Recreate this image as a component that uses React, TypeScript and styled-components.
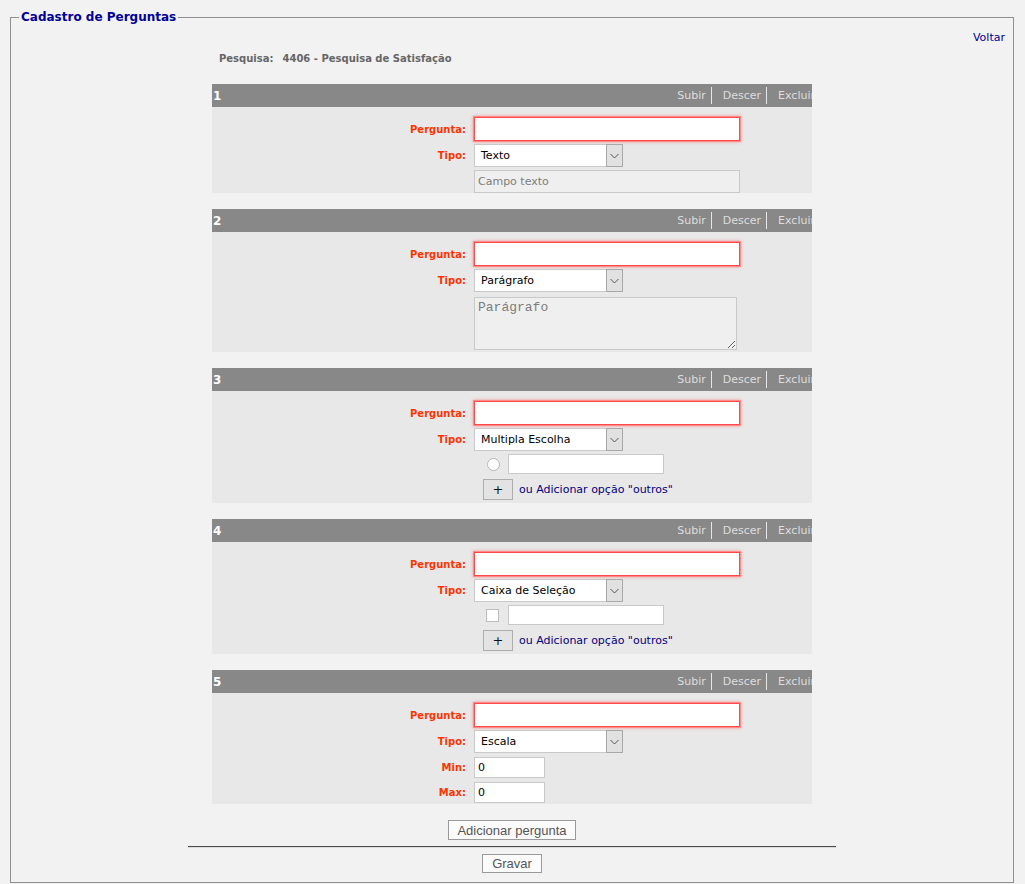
import styled, { createGlobalStyle } from 'styled-components';

const GlobalStyle = createGlobalStyle`
  html, body { margin: 0; padding: 0; background: #f2f2f2; }
  body { font-family: "DejaVu Sans", Verdana, sans-serif; font-size: 11px; color: #333; }
  * { box-sizing: border-box; }
`;

const Page = styled.div`
  padding-top: 10px;
  padding-bottom: 1px;
`;

const Frame = styled.fieldset`
  margin: 0 11px 0 10px;
  padding: 0 8px 9px 8px;
  border: 1px solid #8f8f8f;
  min-width: 0;
`;

const Legend = styled.legend`
  padding: 0 2px;
  font-size: 12px;
  line-height: 14px;
  font-weight: bold;
  color: #000099;
`;

const TopBar = styled.div`
  display: flex;
  justify-content: flex-end;
  margin-top: 7px;
  line-height: 13px;
`;

const BackLink = styled.a`
  color: #000099;
  text-decoration: none;
  font-size: 11px;
`;

const Column = styled.div`
  width: 600px;
  margin: 0 auto;
`;

const InfoRow = styled.div`
  display: flex;
  gap: 9px;
  margin-top: 8px;
  padding-left: 7px;
  font-size: 10px;
  line-height: 13px;
  font-weight: bold;
  color: #666;
`;

const QuestionList = styled.div`
  display: flex;
  flex-direction: column;
  gap: 16px;
  margin-top: 19px;
`;

const Block = styled.section`
  display: flex;
  flex-direction: column;
`;

const BlockHead = styled.div`
  display: flex;
  align-items: center;
  height: 23px;
  background: #888888;
  overflow: hidden;
`;

const BlockNo = styled.span`
  flex: 1;
  padding-left: 1px;
  font-size: 12px;
  font-weight: bold;
  color: #fff;
`;

const Actions = styled.div`
  display: flex;
  flex: none;
  align-items: center;
  margin-right: -8px;
  white-space: nowrap;
`;

const Action = styled.a`
  display: flex;
  align-items: center;
  height: 17px;
  padding: 0 5px 0 11px;
  font-size: 11px;
  color: #dedede;
  text-decoration: none;
  border-right: 1px solid #e6e6e6;
  &:first-child { padding-left: 10px; }
  &:last-child { border-right: 0; }
`;

const BlockBody = styled.div<{ $pb: number }>`
  display: grid;
  grid-template-columns: 256px 268px;
  column-gap: 6px;
  align-items: center;
  padding: 10px 0 ${(p) => p.$pb}px;
  background: #e8e8e8;
`;

const Label = styled.span<{ $mt?: number }>`
  grid-column: 1;
  justify-self: end;
  padding-right: 2px;
  margin-top: ${(p) => p.$mt ?? 0}px;
  font-size: 10px;
  font-weight: bold;
  color: #ff3300;
`;

const Cell = styled.div<{ $mt?: number }>`
  grid-column: 2;
  display: flex;
  align-items: center;
  margin-top: ${(p) => p.$mt ?? 0}px;
`;

const QuestionInput = styled.input`
  width: 266px;
  height: 24px;
  margin: 0;
  padding: 0 4px;
  border: 1px solid #ff4a4a;
  box-shadow: 0 0 0 1px #ff8a8a, 0 0 3px 1px rgba(255, 90, 90, 0.55);
  background: #fff;
  font: 11px "DejaVu Sans", Verdana, sans-serif;
  outline: none;
`;

const SelectBox = styled.div`
  display: flex;
  width: 149px;
  height: 23px;
  border: 1px solid #c9c9c9;
  background: #fff;
`;

const SelectText = styled.span`
  flex: 1;
  display: flex;
  align-items: center;
  padding-left: 6px;
  font-size: 11px;
  color: #000;
`;

const SelectArrow = styled.span`
  display: flex;
  align-items: center;
  justify-content: center;
  width: 17px;
  margin: -1px -1px -1px 0;
  border: 1px solid #a8a8a8;
  background: #e1e1e1;
`;

const MutedField = styled.input`
  width: 266px;
  height: 23px;
  margin: 0;
  padding: 0 3px;
  border: 1px solid #c9c9c9;
  background: #efefef;
  font: 11px "DejaVu Sans", Verdana, sans-serif;
  &::placeholder { color: #7d7d7d; }
`;

const MutedArea = styled.textarea`
  width: 263px;
  height: 53px;
  margin: 0;
  padding: 2px 3px;
  border: 1px solid #c9c9c9;
  background: #efefef;
  resize: both;
  font: 13px "Liberation Mono", "Courier New", monospace;
  &::placeholder { color: #7d7d7d; }
`;

const OptionRow = styled.div<{ $indent: number }>`
  display: flex;
  align-items: center;
  gap: 8px;
  padding-left: ${(p) => p.$indent}px;
`;

const Radio = styled.span`
  width: 13px;
  height: 13px;
  border-radius: 50%;
  border: 1px solid #b5b5b5;
  background: #fff;
`;

const Check = styled.span`
  width: 13px;
  height: 13px;
  margin-right: 1px;
  border: 1px solid #bdbdbd;
  background: #fff;
`;

const OptionInput = styled.input`
  width: 156px;
  height: 20px;
  margin: 0;
  padding: 0 3px;
  border: 1px solid #c9c9c9;
  background: #fff;
  font: 11px "DejaVu Sans", Verdana, sans-serif;
`;

const AddRow = styled.div`
  display: flex;
  align-items: center;
  gap: 6px;
  padding-left: 9px;
`;

const PlusButton = styled.button`
  width: 30px;
  height: 21px;
  padding: 0;
  border: 1px solid #adadad;
  background: #e3e3e3;
  font: 13px "DejaVu Sans", Verdana, sans-serif;
  color: #111;
`;

const OtherLink = styled.a`
  font-size: 11px;
  color: #000080;
  text-decoration: none;
`;

const SmallInput = styled.input`
  width: 71px;
  height: 21px;
  margin: 0;
  padding: 0 3px;
  border: 1px solid #c9c9c9;
  background: #fff;
  font: 11px "DejaVu Sans", Verdana, sans-serif;
  color: #000;
`;

const Footer = styled.div`
  display: flex;
  flex-direction: column;
  align-items: center;
  margin-top: 16px;
`;

const PlainButton = styled.button<{ $w: number; $h: number }>`
  width: ${(p) => p.$w}px;
  height: ${(p) => p.$h}px;
  padding: 0;
  border: 1px solid #9a9a9a;
  background: #fbfbfb;
  font: 13px "Liberation Sans", Arial, sans-serif;
  color: #555;
`;

const Rule = styled.hr`
  width: 648px;
  margin: 6px 0 6px;
  border: 0;
  border-top: 1px solid #4a4a4a;
  border-bottom: 1px solid #dcdcdc;
`;

function Chevron() {
  return (
    <svg width="9" height="6" viewBox="0 0 9 6">
      <path d="M0.5 1 L4.5 5 L8.5 1" fill="none" stroke="#555" strokeWidth="1" />
    </svg>
  );
}

function Select({ value }: { value: string }) {
  return (
    <SelectBox>
      <SelectText>{value}</SelectText>
      <SelectArrow>
        <Chevron />
      </SelectArrow>
    </SelectBox>
  );
}

function Head({ n }: { n: number }) {
  return (
    <BlockHead>
      <BlockNo>{n}</BlockNo>
      <Actions>
        <Action href="#">Subir</Action>
        <Action href="#">Descer</Action>
        <Action href="#">Excluir</Action>
      </Actions>
    </BlockHead>
  );
}

function TopRows({ tipo }: { tipo: string }) {
  return (
    <>
      <Label>Pergunta:</Label>
      <Cell>
        <QuestionInput />
      </Cell>
      <Label $mt={3}>Tipo:</Label>
      <Cell $mt={3}>
        <Select value={tipo} />
      </Cell>
    </>
  );
}

function OptionsRows({ kind }: { kind: 'radio' | 'check' }) {
  return (
    <>
      <Cell $mt={3}>
        <OptionRow $indent={kind === 'radio' ? 13 : 12}>
          {kind === 'radio' ? <Radio /> : <Check />}
          <OptionInput />
        </OptionRow>
      </Cell>
      <Cell $mt={5}>
        <AddRow>
          <PlusButton>+</PlusButton>
          <OtherLink href="#">ou Adicionar opção "outros"</OtherLink>
        </AddRow>
      </Cell>
    </>
  );
}

export default function App() {
  return (
    <Page>
      <GlobalStyle />
      <Frame>
        <Legend>Cadastro de Perguntas</Legend>
        <TopBar>
          <BackLink href="#">Voltar</BackLink>
        </TopBar>
        <Column>
          <InfoRow>
            <span>Pesquisa:</span>
            <span>4406 - Pesquisa de Satisfação</span>
          </InfoRow>
          <QuestionList>
            <Block>
              <Head n={1} />
              <BlockBody $pb={0}>
                <TopRows tipo="Texto" />
                <Cell $mt={3}>
                  <MutedField placeholder="Campo texto" readOnly />
                </Cell>
              </BlockBody>
            </Block>
            <Block>
              <Head n={2} />
              <BlockBody $pb={2}>
                <TopRows tipo="Parágrafo" />
                <Cell $mt={5}>
                  <MutedArea placeholder="Parágrafo" readOnly />
                </Cell>
              </BlockBody>
            </Block>
            <Block>
              <Head n={3} />
              <BlockBody $pb={3}>
                <TopRows tipo="Multipla Escolha" />
                <OptionsRows kind="radio" />
              </BlockBody>
            </Block>
            <Block>
              <Head n={4} />
              <BlockBody $pb={3}>
                <TopRows tipo="Caixa de Seleção" />
                <OptionsRows kind="check" />
              </BlockBody>
            </Block>
            <Block>
              <Head n={5} />
              <BlockBody $pb={1}>
                <TopRows tipo="Escala" />
                <Label $mt={4}>Min:</Label>
                <Cell $mt={4}>
                  <SmallInput defaultValue="0" />
                </Cell>
                <Label $mt={4}>Max:</Label>
                <Cell $mt={4}>
                  <SmallInput defaultValue="0" />
                </Cell>
              </BlockBody>
            </Block>
          </QuestionList>
        </Column>
        <Footer>
          <PlainButton $w={128} $h={20}>Adicionar pergunta</PlainButton>
          <Rule />
          <PlainButton $w={60} $h={19}>Gravar</PlainButton>
        </Footer>
      </Frame>
    </Page>
  );
}
